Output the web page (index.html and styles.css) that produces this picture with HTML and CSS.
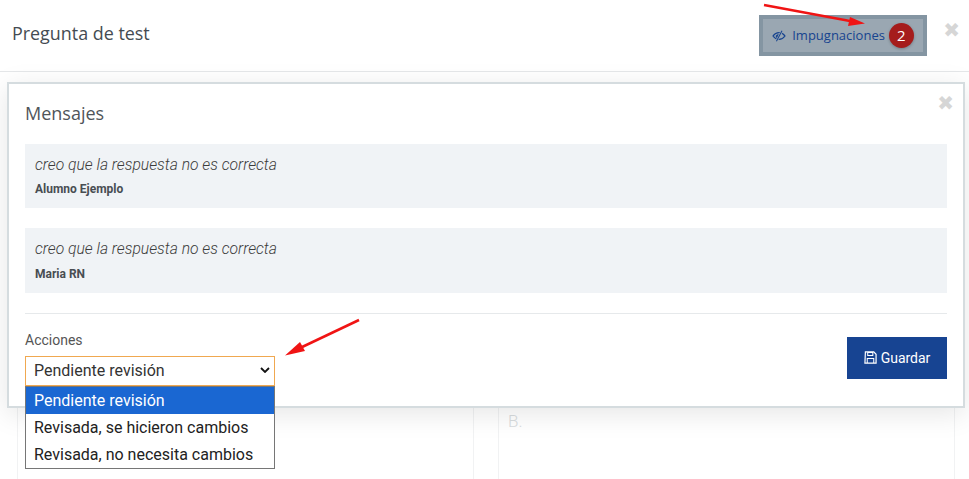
FILE: index.html
```html
<!DOCTYPE html>
<html lang="es">
<head>
<meta charset="utf-8">
<title>Pregunta de test</title>
<link rel="stylesheet" href="styles.css">
</head>
<body>
<div class="page">
  <header class="top">
    <h1 class="title">Pregunta de test</h1>
    <div class="top-actions">
      <div class="imp-outline">
        <div class="imp-btn">
          <svg class="eye" viewBox="0 0 16 14" width="14" height="12"><path d="M1 7c1.800-2.600 4-4 7-4s5.200 1.400 7 4c-1.800 2.600-4 4-7 4S2.800 9.600 1 7z" fill="none" stroke="#17448f" stroke-width="1.500"/><path d="M4 7c1-1.500 2.300-2 4-2l-2 5C5 9.500 4.500 8 4 7z" fill="#17448f"/><path d="M11.500 1 5 13" stroke="#9aa7b2" stroke-width="2.600"/><path d="M11.500 1 5 13" stroke="#17448f" stroke-width="1.200"/></svg>
          <span class="imp-label">Impugnaciones</span>
          <span class="badge">2</span>
        </div>
      </div>
      <span class="close top-close">&#10006;</span>
    </div>
  </header>
  <div class="under">
    <div class="col col-left"></div>
    <div class="col col-right"><span class="letter">B.</span></div>
  </div>

  <section class="panel">
    <span class="close panel-close">&#10006;</span>
    <h2 class="panel-title">Mensajes</h2>
    <div class="msg">
      <p class="msg-text">creo que la respuesta no es correcta</p>
      <p class="msg-author">Alumno Ejemplo</p>
    </div>
    <div class="msg">
      <p class="msg-text">creo que la respuesta no es correcta</p>
      <p class="msg-author">Maria RN</p>
    </div>
    <hr class="sep">
    <div class="actions">
      <div class="field">
        <div class="field-label">Acciones</div>
        <div class="select">
          <span>Pendiente revisión</span>
          <svg viewBox="0 0 10 6" width="10" height="6"><path d="M1 1l4 4 4-4" fill="none" stroke="#111" stroke-width="1.800"/></svg>
        </div>
        <ul class="options">
          <li class="option option-on">Pendiente revisión</li>
          <li class="option">Revisada, se hicieron cambios</li>
          <li class="option">Revisada, no necesita cambios</li>
        </ul>
      </div>
      <button class="save" type="button">
        <svg viewBox="0 0 14 14" width="13" height="13"><path d="M1.500 1h9L13 3.500V13H1z" fill="none" stroke="#fff" stroke-width="1.300"/><path d="M4 1.500h5.500v3.300H4z" fill="none" stroke="#fff" stroke-width="1.100"/><path d="M3.500 13V8h7v5" fill="none" stroke="#fff" stroke-width="1.100"/></svg>
        Guardar
      </button>
    </div>
  </section>

  <svg class="arrows" viewBox="0 0 969 479" width="969" height="479">
    <path d="M764 5 850 21" stroke="#f01414" stroke-width="2.500" fill="none"/>
    <path d="M865 23.500 850 17 848 26z" fill="#f01414"/>
    <path d="M359 320 300 348" stroke="#f01414" stroke-width="2.500" fill="none"/>
    <path d="M285 355.500 300 342 305 351z" fill="#f01414"/>
  </svg>
</div>
</body>
</html>
```
FILE: styles.css
```css
* { box-sizing: border-box; }
html, body { margin: 0; padding: 0; background: #fff; }
body { font-family: Roboto, "Liberation Sans", sans-serif; color: #333; }
.page { position: relative; width: 969px; height: 479px; overflow: hidden; }

.top {
  height: 72px;
  display: flex;
  align-items: flex-start;
  justify-content: space-between;
  padding: 15px 9px 0 12px;
  border-bottom: 1px solid #e5e7e9;
}
.title {
  margin: 6px 0 0;
  font: 400 17.900px/24px "Open Sans", sans-serif;
  color: #444b52;
}
.top-actions { display: flex; align-items: flex-start; }
.imp-outline {
  width: 168px;
  height: 41px;
  padding: 4px;
  background: #8495a2;
}
.imp-btn {
  height: 33px;
  display: flex;
  align-items: center;
  padding-left: 9px;
  background: #9aa7b2;
  color: #17448f;
}
.eye { margin-right: 6px; }
.imp-label { font: 400 13px/18px "Open Sans", sans-serif; position: relative; top: -1px; }
.badge {
  width: 25px;
  height: 25px;
  margin-left: 4px;
  border-radius: 50%;
  background: #a51c1c;
  color: #fff;
  font: 400 15px/25px "Open Sans", sans-serif;
  text-align: center;
  box-shadow: 0 1px 3px rgba(0,0,0,.25);
}
.close {
  color: #d6d6d6;
  font: 700 20px/20px "DejaVu Sans", sans-serif;
}
.top-close { margin: 5px 0 0 16px; }

.under {
  height: 407px;
  display: flex;
  gap: 24px;
  padding: 10px 14px 0 17px;
}
.col {
  flex: 1;
  border-left: 1px solid #f1f2f3;
  border-right: 1px solid #f1f2f3;
  padding: 329px 0 0 9px;
}
.letter { font-size: 17px; font-weight: 300; color: #d8dcde; }

.panel {
  position: absolute;
  left: 7px;
  top: 82px;
  width: 958px;
  height: 326px;
  padding: 16px;
  background: #fff;
  border: 2px solid #d5dcdf;
  box-shadow: 0 6px 26px rgba(0,0,0,.1);
}
.panel-close { position: absolute; right: 9px; top: 9px; }
.panel-title {
  margin: 1px 0 18.800px;
  font: 400 18px/24px "Open Sans", sans-serif;
  color: #50555a;
}
.msg {
  height: 64.400px;
  margin-bottom: 20px;
  padding: 11px 10px 0;
  background: #f0f3f6;
}
.msg-text {
  margin: 0;
  font-size: 15.700px;
  line-height: 20px;
  font-weight: 300;
  font-style: italic;
  color: #3c3c3c;
}
.msg-author {
  margin: 6.400px 0 0;
  font-size: 12px;
  line-height: 16px;
  font-weight: 700;
  color: #484d52;
}
.sep { margin: 0 0 18.400px; border: 0; border-top: 1px solid #e6e9eb; }
.actions { display: flex; justify-content: space-between; align-items: flex-start; }
.field { width: 250px; }
.field-label { font-size: 14px; line-height: 16px; color: #555; margin-bottom: 8px; }
.select {
  height: 30px;
  display: flex;
  align-items: center;
  justify-content: space-between;
  padding: 0 4px 1px 8px;
  background: #fff;
  border: 1px solid #f0a850;
  font-size: 16px;
  color: #333;
}
.options {
  position: relative;
  z-index: 2;
  list-style: none;
  margin: 0;
  padding: 0;
  height: 83px;
  background: #fff;
  border: 1px solid #767676;
}
.option { height: 27px; padding-left: 8px; font-size: 16px; line-height: 27px; color: #222; }
.option-on { background: #1a67d2; color: #fff; }
.save {
  width: 100px;
  height: 42px;
  margin-top: 5px;
  border: 0;
  background: #174492;
  color: #fff;
  font: 400 14px/20px Roboto, sans-serif;
  display: flex;
  align-items: center;
  justify-content: center;
  gap: 4px;
}
.arrows { position: absolute; left: 0; top: 0; z-index: 3; pointer-events: none; }
```
